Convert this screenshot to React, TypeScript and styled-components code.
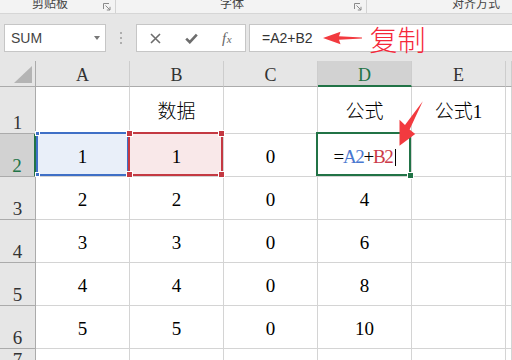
import React from "react";
import styled, { createGlobalStyle } from "styled-components";

const Global = createGlobalStyle`
  html, body { margin: 0; padding: 0; background: #fff; }
  body { width: 512px; height: 360px; overflow: hidden; }
`;

const Page = styled.div`
  width: 512px;
  height: 360px;
  overflow: hidden;
  display: flex;
  flex-direction: column;
  font-family: "Liberation Sans", Arial, sans-serif;
`;

const Ribbon = styled.div`
  display: flex;
  height: 14px;
  flex: none;
  box-sizing: border-box;
  border-bottom: 1px solid #d6d6d6;
  background: #f3f3f3;
  overflow: hidden;
`;

const RibbonGroup = styled.div<{ $w?: number; $pad: number }>`
  display: flex;
  align-items: flex-start;
  box-sizing: border-box;
  width: ${(p) => (p.$w ? `${p.$w}px` : "auto")};
  flex: ${(p) => (p.$w ? "none" : "1")};
  padding-left: ${(p) => p.$pad}px;
  border-right: ${(p) => (p.$w ? "1px solid #d3d3d3" : "none")};
`;

const GroupLabel = styled.span`
  font-family: "Noto Sans CJK SC", sans-serif;
  font-size: 12px;
  line-height: 12px;
  margin-top: -3px;
  color: #444;
  white-space: nowrap;
`;

const LauncherIcon = styled.svg`
  margin-left: auto;
  margin-right: 4px;
  margin-top: 3px;
  flex: none;
`;

const Launcher = () => (
  <LauncherIcon width="8" height="8" viewBox="0 0 8 8">
    <path d="M0.5 6V0.5H6" fill="none" stroke="#8a8a8a" strokeWidth="1" />
    <path d="M2.5 2.5L7 7M7 3.8V7H3.8" fill="none" stroke="#8a8a8a" strokeWidth="1" />
  </LauncherIcon>
);

const FormulaBar = styled.div`
  display: flex;
  align-items: flex-start;
  height: 47px;
  flex: none;
  box-sizing: border-box;
  padding-top: 10px;
  background: #e6e6e6;
`;

const FieldBox = styled.div`
  box-sizing: border-box;
  height: 28px;
  background: #fff;
  border: 1px solid #c6c6c6;
  display: flex;
  align-items: center;
`;

const NameBox = styled(FieldBox)`
  width: 102px;
  margin-left: 4px;
  padding: 0 5px 0 6px;
  justify-content: space-between;
  font-size: 14px;
  color: #444;
`;

const Caret = styled.span`
  width: 0;
  height: 0;
  border-left: 3.5px solid transparent;
  border-right: 3.5px solid transparent;
  border-top: 4px solid #777;
`;

const Grip = styled.div`
  width: 30px;
  height: 28px;
  display: flex;
  flex-direction: column;
  align-items: center;
  justify-content: center;
  gap: 3px;
`;

const GripDot = styled.span`
  width: 2px;
  height: 2px;
  background: #aeaeae;
`;

const FxBox = styled(FieldBox)`
  width: 110px;
`;

const FxSlot = styled.div`
  flex: 1;
  display: flex;
  align-items: center;
  justify-content: center;
  height: 100%;
`;

const FxText = styled.span`
  font-family: "Liberation Serif", serif;
  font-style: italic;
  font-size: 15px;
  color: #666;
  letter-spacing: 0.5px;
  small { font-size: 11px; }
`;

const FormulaInput = styled(FieldBox)`
  flex: 1;
  margin-left: 3px;
  margin-right: -6px;
  padding-left: 12px;
  font-size: 14px;
  color: #333;
  white-space: nowrap;
`;

const PointerLeft = styled.svg`
  margin-left: 10px;
  flex: none;
`;

const Annotation = styled.span`
  margin-left: 7px;
  font-family: "Noto Sans CJK SC", sans-serif;
  font-weight: 300;
  font-size: 28px;
  line-height: 28px;
  color: #f5283a;
  margin-top: 2px;
`;

const Sheet = styled.div`
  position: relative;
  flex: 1;
  display: grid;
  grid-template-columns: 36px repeat(5, 94px) 1fr;
  grid-template-rows: 26px 47px repeat(5, 43px) 22px;
  overflow: hidden;
`;

const Corner = styled.div`
  box-sizing: border-box;
  background: #e6e6e6;
  border-right: 1px solid #ababab;
  border-bottom: 1px solid #ababab;
  display: flex;
  align-items: flex-end;
  justify-content: flex-end;
  padding: 0 3px 3px 0;
`;

const ColHeader = styled.div<{ $sel?: boolean }>`
  box-sizing: border-box;
  background: ${(p) => (p.$sel ? "#d2d2d2" : "#e6e6e6")};
  border-right: 1px solid #cdcdcd;
  border-bottom: ${(p) => (p.$sel ? "2px solid #217346" : "1px solid #ababab")};
  display: flex;
  align-items: center;
  justify-content: center;
  padding-top: ${(p) => (p.$sel ? "5px" : "4px")};
  font-family: "Liberation Serif", serif;
  font-size: 18px;
  color: ${(p) => (p.$sel ? "#217346" : "#333")};
`;

const RowHeader = styled.div<{ $sel?: boolean }>`
  box-sizing: border-box;
  background: ${(p) => (p.$sel ? "#d2d2d2" : "#e6e6e6")};
  border-right: ${(p) => (p.$sel ? "2px solid #217346" : "1px solid #ababab")};
  border-bottom: 1px solid #ababab;
  display: flex;
  align-items: flex-end;
  justify-content: center;
  padding-bottom: 1px;
  font-family: "Liberation Serif", serif;
  font-size: 19px;
  line-height: 19px;
  color: ${(p) => (p.$sel ? "#217346" : "#333")};
`;

const Cell = styled.div<{ $tint?: string }>`
  position: relative;
  box-sizing: border-box;
  background: ${(p) => p.$tint || "#fff"};
  border-right: 1px solid #d4d4d4;
  border-bottom: 1px solid #d4d4d4;
  display: flex;
  align-items: center;
  justify-content: center;
  padding-top: 4px;
  font-family: "Liberation Serif", "Noto Sans CJK SC", serif;
  font-weight: 300;
  font-size: 19px;
  line-height: 20px;
  color: #000;
  white-space: nowrap;
`;

const RefFrame = styled.div<{ $color: string; $left: number }>`
  position: absolute;
  z-index: 2;
  top: -2px;
  left: ${(p) => p.$left}px;
  right: 0;
  bottom: 0;
  border: 2px solid ${(p) => p.$color};
  pointer-events: none;
`;

const Handle = styled.span<{ $color: string; $size: number }>`
  position: absolute;
  width: ${(p) => p.$size}px;
  height: ${(p) => p.$size}px;
  background: ${(p) => p.$color};
  box-shadow: 0 0 0 1px #fff;
`;

const EditText = styled.span`
  letter-spacing: -1.3px;
`;

const RefA = styled.span`
  color: #4a78d0;
`;

const RefB = styled.span`
  color: #cc3a48;
`;

const TextCursor = styled.span`
  display: inline-block;
  width: 1px;
  height: 17px;
  background: #000;
  margin-left: 2px;
  vertical-align: -4px;
`;

const PointerDown = styled.svg`
  position: absolute;
  left: 396px;
  top: 39px;
  z-index: 3;
`;

const BLUE = "#3f6fc6";
const RED = "#c43942";
const GREEN = "#217346";

type Row = { n: number; cells: string[] };

const rows: Row[] = [
  { n: 1, cells: ["", "数据", "", "公式", "公式1", ""] },
  { n: 2, cells: ["1", "1", "0", "EDIT", "", ""] },
  { n: 3, cells: ["2", "2", "0", "4", "", ""] },
  { n: 4, cells: ["3", "3", "0", "6", "", ""] },
  { n: 5, cells: ["4", "4", "0", "8", "", ""] },
  { n: 6, cells: ["5", "5", "0", "10", "", ""] },
  { n: 7, cells: ["", "", "", "", "", ""] },
];

const cols = ["A", "B", "C", "D", "E", ""];

function renderCell(r: number, c: number, v: string) {
  const key = `${r}-${c}`;
  if (r === 2 && c === 0) {
    return (
      <Cell key={key} $tint="#e9eff9">
        {v}
        <RefFrame $color={BLUE} $left={0}>
          <Handle $color={BLUE} $size={3} style={{ left: -2, top: -2 }} />
          <Handle $color={BLUE} $size={3} style={{ left: -2, bottom: -2 }} />
        </RefFrame>
      </Cell>
    );
  }
  if (r === 2 && c === 1) {
    return (
      <Cell key={key} $tint="#f9e8e9">
        {v}
        <RefFrame $color={RED} $left={-2}>
          <Handle $color={RED} $size={5} style={{ left: -3, top: -3 }} />
          <Handle $color={RED} $size={5} style={{ right: -3, top: -3 }} />
          <Handle $color={RED} $size={5} style={{ left: -3, bottom: -3 }} />
          <Handle $color={RED} $size={5} style={{ right: -3, bottom: -3 }} />
        </RefFrame>
      </Cell>
    );
  }
  if (v === "EDIT") {
    return (
      <Cell key={key}>
        <EditText>
          =<RefA>A2</RefA>+<RefB>B2</RefB>
        </EditText>
        <TextCursor />
        <RefFrame $color={GREEN} $left={-2}>
          <Handle $color={GREEN} $size={5} style={{ right: -4, bottom: -4 }} />
        </RefFrame>
      </Cell>
    );
  }
  return <Cell key={key}>{v}</Cell>;
}

export default function App() {
  return (
    <Page>
      <Global />
      <Ribbon>
        <RibbonGroup $w={116} $pad={32}>
          <GroupLabel>剪贴板</GroupLabel>
          <Launcher />
        </RibbonGroup>
        <RibbonGroup $w={251} $pad={104}>
          <GroupLabel>字体</GroupLabel>
          <Launcher />
        </RibbonGroup>
        <RibbonGroup $pad={85}>
          <GroupLabel>对齐方式</GroupLabel>
        </RibbonGroup>
      </Ribbon>

      <FormulaBar>
        <NameBox>
          <span>SUM</span>
          <Caret />
        </NameBox>
        <Grip>
          <GripDot />
          <GripDot />
          <GripDot />
        </Grip>
        <FxBox>
          <FxSlot>
            <svg width="11" height="11" viewBox="0 0 11 11">
              <path d="M1 1L10 10M10 1L1 10" stroke="#6d6d6d" strokeWidth="1.6" fill="none" />
            </svg>
          </FxSlot>
          <FxSlot>
            <svg width="13" height="11" viewBox="0 0 13 11">
              <path d="M1.2 5.6L4.8 9.2L11.8 1.6" stroke="#6d6d6d" strokeWidth="2.6" fill="none" />
            </svg>
          </FxSlot>
          <FxSlot>
            <FxText>
              f<small>x</small>
            </FxText>
          </FxSlot>
        </FxBox>
        <FormulaInput>
          <span>=A2+B2</span>
          <PointerLeft width="40" height="14" viewBox="0 0 40 14">
            <path d="M0 7L17.5 0.8L16 5.2L39 6.4L39 7.6L16 8.8L17.5 13.2Z" fill="#f23a3f" />
          </PointerLeft>
          <Annotation>复制</Annotation>
        </FormulaInput>
      </FormulaBar>

      <Sheet>
        <Corner>
          <svg width="18" height="17" viewBox="0 0 18 17">
            <path d="M18 0V17H0Z" fill="#b4b4b4" />
          </svg>
        </Corner>
        {cols.map((c, i) => (
          <ColHeader key={`h${i}`} $sel={c === "D"}>
            {c}
          </ColHeader>
        ))}
        {rows.map((row) => (
          <React.Fragment key={row.n}>
            <RowHeader $sel={row.n === 2}>{row.n}</RowHeader>
            {row.cells.map((v, ci) => renderCell(row.n, ci, v))}
          </React.Fragment>
        ))}
        <PointerDown width="28" height="48" viewBox="0 0 28 48">
          <path d="M26.8 1.2L13.6 29.4L19.2 34L3.5 45.8L3.5 19.8L9 25Z" fill="#f23a3f" />
        </PointerDown>
      </Sheet>
    </Page>
  );
}
